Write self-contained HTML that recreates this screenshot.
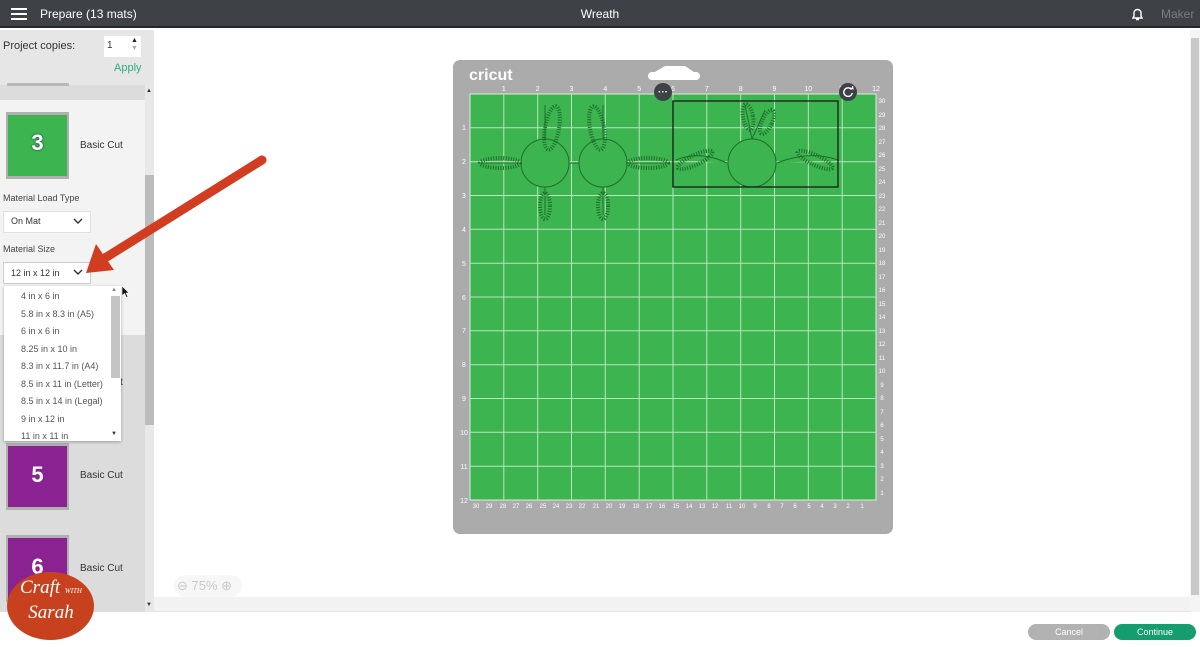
<!DOCTYPE html>
<html><head><meta charset="utf-8"><style>
*{margin:0;padding:0;box-sizing:border-box}
body{width:1200px;height:647px;overflow:hidden;background:#fff;font-family:"Liberation Sans",sans-serif;position:relative}
.a{position:absolute}
</style></head><body>
<!-- header -->
<div class="a" style="left:0;top:0;width:1200px;height:28px;background:#3e4246;border-bottom:2px solid #25282b"></div>
<div class="a" style="left:11px;top:8px;width:16px;height:2px;background:#fff;box-shadow:0 5px 0 #fff,0 10px 0 #fff"></div>
<div class="a" style="left:40px;top:7px;color:#fff;font-size:12px">Prepare (13 mats)</div>
<div class="a" style="left:0;width:1200px;top:7px;text-align:center;color:#fff;font-size:12px">Wreath</div>
<svg class="a" style="left:1130px;top:7px" width="15" height="15" viewBox="0 0 15 15"><path d="M3 11 L4 9 V6 a3.5 3.5 0 0 1 7 0 V9 L12 11 Z M6 12.5 h3" fill="none" stroke="#fff" stroke-width="1.4"/></svg>
<div class="a" style="left:1161px;top:7px;color:#7a7d80;font-size:12px">Maker</div>

<!-- sidebar -->
<div class="a" style="left:0;top:30px;width:154px;height:582px;background:#f3f3f3"></div>
<div class="a" style="left:0;top:30px;width:154px;height:55px;background:#e6e6e6"></div>
<div class="a" style="left:3px;top:40px;font-size:11px;color:#333">Project copies:</div>
<div class="a" style="left:104px;top:36px;width:37px;height:21px;background:#fff"></div>
<div class="a" style="left:107px;top:40px;font-size:10px;color:#333">1</div>
<div class="a" style="left:131px;top:37px;font-size:7px;color:#222;line-height:8px">▲<br><span style="color:#aaa">▼</span></div>
<div class="a" style="left:114px;top:62px;font-size:11px;color:#2fae7c">Apply</div>
<div class="a" style="left:0;top:85px;width:145px;height:15px;background:#dcdcdc"></div>
<div class="a" style="left:7px;top:83px;width:62px;height:3px;background:#b8b8b8"></div>
<div class="a" style="left:145px;top:85px;width:9px;height:527px;background:#e8e8e8"></div>
<div class="a" style="left:145px;top:175px;width:9px;height:250px;background:#bcbcbc"></div>
<div class="a" style="left:146px;top:88px;font-size:6px;color:#333">▲</div>
<div class="a" style="left:146px;top:602px;font-size:6px;color:#333">▼</div>
<div class="a" style="left:0;top:335px;width:145px;height:277px;background:#dcdcdc"></div>

<!-- thumb 3 -->
<div class="a" style="left:6px;top:112px;width:63px;height:67px;background:#b0b0b0"></div>
<div class="a" style="left:8px;top:115px;width:59px;height:61px;background:#3cb44f"></div>
<div class="a" style="left:9px;top:130px;width:57px;text-align:center;color:#fff;font-weight:bold;font-size:22px;text-shadow:0 0 2px #225">3</div>
<div class="a" style="left:80px;top:140px;font-size:10px;color:#333">Basic Cut</div>
<div class="a" style="left:3px;top:193px;font-size:9px;color:#444">Material Load Type</div>
<div class="a" style="left:3px;top:211px;width:88px;height:22px;background:#fff;border:1px solid #e0e0e0"></div>
<div class="a" style="left:11px;top:216px;font-size:9px;color:#333">On Mat</div>
<svg class="a" style="left:73px;top:218px" width="10" height="7"><path d="M1 1 L5 5 L9 1" fill="none" stroke="#333" stroke-width="1.4"/></svg>
<div class="a" style="left:3px;top:244px;font-size:9px;color:#444">Material Size</div>
<div class="a" style="left:3px;top:262px;width:88px;height:22px;background:#fff;border:1px solid #ccc"></div>
<div class="a" style="left:11px;top:268px;font-size:9px;color:#333">12 in x 12 in</div>
<svg class="a" style="left:73px;top:269px" width="10" height="7"><path d="M1 1 L5 5 L9 1" fill="none" stroke="#333" stroke-width="1.4"/></svg>

<!-- thumbs 5,6 -->
<div class="a" style="left:6px;top:443px;width:63px;height:67px;background:#b0b0b0"></div>
<div class="a" style="left:8px;top:446px;width:59px;height:61px;background:#8a2391"></div>
<div class="a" style="left:9px;top:462px;width:57px;text-align:center;color:#fff;font-weight:bold;font-size:22px">5</div>
<div class="a" style="left:80px;top:470px;font-size:10px;color:#333">Basic Cut</div>
<div class="a" style="left:6px;top:535px;width:63px;height:67px;background:#b0b0b0"></div>
<div class="a" style="left:8px;top:538px;width:59px;height:64px;background:#8a2391"></div>
<div class="a" style="left:9px;top:554px;width:57px;text-align:center;color:#fff;font-weight:bold;font-size:22px">6</div>
<div class="a" style="left:80px;top:563px;font-size:10px;color:#333">Basic Cut</div>
<div class="a" style="left:80px;top:377px;font-size:10px;color:#333">Basic Cut</div>

<!-- dropdown list -->
<div class="a" style="left:4px;top:286px;width:117px;height:155px;background:#fff;box-shadow:0 1px 3px rgba(0,0,0,.3)"></div>
<div class="a" style="left:111px;top:296px;width:9px;height:82px;background:#c4c4c4"></div>
<div class="a" style="left:111px;top:287px;font-size:6px;color:#888">▲</div>
<div class="a" style="left:111px;top:431px;font-size:6px;color:#333">▼</div>
<div class="a" style="left:21px;top:288px;font-size:9px;color:#555;line-height:17.5px">4 in x 6 in<br>5.8 in x 8.3 in (A5)<br>6 in x 6 in<br>8.25 in x 10 in<br>8.3 in x 11.7 in (A4)<br>8.5 in x 11 in (Letter)<br>8.5 in x 14 in (Legal)<br>9 in x 12 in<br><span style="display:inline-block;height:11px;overflow:hidden">11 in x 11 in</span></div>
<svg class="a" style="left:120px;top:285px" width="10" height="14"><path d="M2 1 V11 L4.5 8.5 L6.5 12.5 L8 11.8 L6 8 H9 Z" fill="#111" stroke="#fff" stroke-width=".6"/></svg>

<!-- red arrow -->
<svg class="a" style="left:0;top:0" width="300" height="300"><line x1="262" y1="160" x2="105" y2="258" stroke="#d23d22" stroke-width="9" stroke-linecap="round"/><polygon points="86,273 96,244 114,270" fill="#d23d22"/></svg>

<!-- zoom control, scrollbars, footer -->
<div class="a" style="left:174px;top:575px;width:68px;height:22px;border-radius:11px;background:#f7f7f7"></div>
<div class="a" style="left:177px;top:578px;font-size:13px;color:#c8c8c8">⊖ 75% ⊕</div>
<div class="a" style="left:154px;top:597px;width:1036px;height:15px;background:#f2f2f2;border-bottom:1px solid #e4e4e4"></div>
<div class="a" style="left:1190px;top:30px;width:10px;height:582px;background:#f4f4f4"></div>
<div class="a" style="left:1191px;top:38px;width:8px;height:557px;background:#c8c8c8"></div>
<div class="a" style="left:1028px;top:624px;width:82px;height:16px;border-radius:8px;background:#b2b2b2;color:#fff;font-size:9px;text-align:center;line-height:16px">Cancel</div>
<div class="a" style="left:1114px;top:624px;width:82px;height:16px;border-radius:8px;background:#159c6f;color:#fff;font-size:9px;text-align:center;line-height:16px">Continue</div>

<!-- logo -->
<div class="a" style="left:7px;top:572px;width:87px;height:68px;border-radius:50%;background:#c8411f"></div>
<div class="a" style="left:12px;top:577px;width:78px;font-family:'Liberation Serif',serif;font-style:italic;color:#fff;font-size:19px;line-height:22px;text-align:center">Craft <span style="font-size:7px">WITH</span><br>Sarah</div>

<!-- mat -->
<svg class="a" style="left:0;top:0" width="1200" height="647">
<rect x="453" y="60" width="440" height="474" rx="7" fill="#ababab"/>
<path d="M648 76 L665 66 H685 L700 76 Z" fill="#fff"/>
<rect x="648" y="72" width="52" height="8" rx="4" fill="#fff"/>
<text x="469" y="80" fill="#fff" font-family="Liberation Sans" font-weight="bold" font-size="16">cricut</text>
<rect x="470" y="94" width="406" height="406" fill="#3cb44f" stroke="#d8f0d8" stroke-width="1"/>
<g stroke="#b9e6bd" stroke-width="1">
<line x1="503.8" y1="94" x2="503.8" y2="500"/><line x1="537.7" y1="94" x2="537.7" y2="500"/><line x1="571.5" y1="94" x2="571.5" y2="500"/><line x1="605.3" y1="94" x2="605.3" y2="500"/><line x1="639.2" y1="94" x2="639.2" y2="500"/><line x1="673" y1="94" x2="673" y2="500"/><line x1="706.8" y1="94" x2="706.8" y2="500"/><line x1="740.7" y1="94" x2="740.7" y2="500"/><line x1="774.5" y1="94" x2="774.5" y2="500"/><line x1="808.3" y1="94" x2="808.3" y2="500"/><line x1="842.2" y1="94" x2="842.2" y2="500"/>
<line y1="127.8" x1="470" y2="127.8" x2="876"/><line y1="161.7" x1="470" y2="161.7" x2="876"/><line y1="195.5" x1="470" y2="195.5" x2="876"/><line y1="229.3" x1="470" y2="229.3" x2="876"/><line y1="263.2" x1="470" y2="263.2" x2="876"/><line y1="297" x1="470" y2="297" x2="876"/><line y1="330.8" x1="470" y2="330.8" x2="876"/><line y1="364.7" x1="470" y2="364.7" x2="876"/><line y1="398.5" x1="470" y2="398.5" x2="876"/><line y1="432.3" x1="470" y2="432.3" x2="876"/><line y1="466.2" x1="470" y2="466.2" x2="876"/>
</g>
<g fill="#fff" font-family="Liberation Sans" font-size="7" text-anchor="middle">
<text x="503.8" y="91">1</text><text x="537.7" y="91">2</text><text x="571.5" y="91">3</text><text x="605.3" y="91">4</text><text x="639.2" y="91">5</text><text x="673" y="91">6</text><text x="706.8" y="91">7</text><text x="740.7" y="91">8</text><text x="774.5" y="91">9</text><text x="808.3" y="91">10</text><text x="842.2" y="91">11</text><text x="876" y="91">12</text>
<text x="464" y="130">1</text><text x="464" y="164">2</text><text x="464" y="198">3</text><text x="464" y="232">4</text><text x="464" y="266">5</text><text x="464" y="300">6</text><text x="464" y="333">7</text><text x="464" y="367">8</text><text x="464" y="401">9</text><text x="464" y="435">10</text><text x="464" y="469">11</text><text x="464" y="503">12</text>
</g>
<g fill="#fff" font-family="Liberation Sans" font-size="6" text-anchor="middle">
<text x="882" y="103">30</text><text x="882" y="117">29</text><text x="882" y="130">28</text><text x="882" y="144">27</text><text x="882" y="157">26</text><text x="882" y="171">25</text><text x="882" y="184">24</text><text x="882" y="198">23</text><text x="882" y="211">22</text><text x="882" y="225">21</text><text x="882" y="238">20</text><text x="882" y="252">19</text><text x="882" y="265">18</text><text x="882" y="279">17</text><text x="882" y="292">16</text><text x="882" y="306">15</text><text x="882" y="319">14</text><text x="882" y="333">13</text><text x="882" y="346">12</text><text x="882" y="360">11</text><text x="882" y="373">10</text><text x="882" y="387">9</text><text x="882" y="400">8</text><text x="882" y="414">7</text><text x="882" y="427">6</text><text x="882" y="441">5</text><text x="882" y="454">4</text><text x="882" y="468">3</text><text x="882" y="481">2</text><text x="882" y="495">1</text>
<text x="476" y="508">30</text><text x="489" y="508">29</text><text x="503" y="508">28</text><text x="516" y="508">27</text><text x="529" y="508">26</text><text x="543" y="508">25</text><text x="556" y="508">24</text><text x="569" y="508">23</text><text x="582" y="508">22</text><text x="596" y="508">21</text><text x="609" y="508">20</text><text x="622" y="508">19</text><text x="636" y="508">18</text><text x="649" y="508">17</text><text x="662" y="508">16</text><text x="676" y="508">15</text><text x="689" y="508">14</text><text x="702" y="508">13</text><text x="715" y="508">12</text><text x="729" y="508">11</text><text x="742" y="508">10</text><text x="755" y="508">9</text><text x="769" y="508">8</text><text x="782" y="508">7</text><text x="795" y="508">6</text><text x="809" y="508">5</text><text x="822" y="508">4</text><text x="835" y="508">3</text><text x="848" y="508">2</text><text x="862" y="508">1</text>
</g>
<!-- design -->
<g fill="#3cb44f" stroke="#1f6e2c" stroke-width="1">
<path d="M520 163 H478 M568 163 H580 M628 163 H668 M545 187 V215 M603 187 V215 M545 139 V105 M603 139 V105 M727 163 Q700 150 676 160 M777 163 Q810 150 838 160 M752 139 L745 105 M752 139 L765 110"/>
<circle cx="545" cy="163" r="24"/><circle cx="603" cy="163" r="24"/><circle cx="752" cy="163" r="24"/>
</g>
<g fill="none" stroke="#1f6e2c" stroke-width="4" stroke-dasharray="1 1.5">
<ellipse cx="500" cy="163" rx="20" ry="5"/><ellipse cx="648" cy="163" rx="20" ry="5"/>
<ellipse cx="545" cy="206" rx="5" ry="13"/><ellipse cx="603" cy="206" rx="5" ry="13"/>
<ellipse cx="552" cy="128" rx="7" ry="22" transform="rotate(10 552 128)"/><ellipse cx="597" cy="128" rx="7" ry="22" transform="rotate(-10 597 128)"/>
<ellipse cx="695" cy="160" rx="19" ry="5" transform="rotate(-25 695 160)"/><ellipse cx="815" cy="160" rx="19" ry="5" transform="rotate(25 815 160)"/>
<ellipse cx="748" cy="117" rx="5" ry="13" transform="rotate(-10 748 117)"/><ellipse cx="767" cy="122" rx="5" ry="13" transform="rotate(25 767 122)"/>
</g>
<rect x="673" y="101" width="165" height="86" fill="none" stroke="#1a1a1a" stroke-width="1.3"/>
<circle cx="663" cy="92" r="9" fill="#3e4246"/><text x="663" y="95" fill="#fff" font-size="10" font-family="Liberation Sans" text-anchor="middle" font-weight="bold">···</text>
<circle cx="848" cy="92" r="9" fill="#3e4246"/><path d="M851.5 89.5 A4.3 4.3 0 1 0 852.3 93" fill="none" stroke="#fff" stroke-width="1.4"/><path d="M850 88 L853 88.8 L852.5 86" fill="none" stroke="#fff" stroke-width="1.2"/>
</svg>
</body></html>
